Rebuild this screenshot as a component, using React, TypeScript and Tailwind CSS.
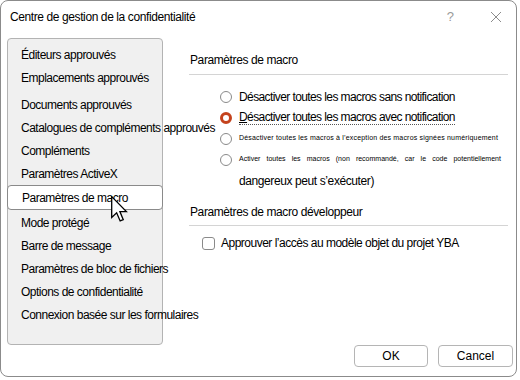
import React from "react";

const items: { label: string; cls: string; selected?: boolean }[] = [
  { label: "Éditeurs approuvés", cls: "" },
  { label: "Emplacements approuvés", cls: "" },
  { label: "Documents approuvés", cls: "mt-[4px]" },
  { label: "Catalogues de compléments approuvés", cls: "" },
  { label: "Compléments", cls: "" },
  { label: "Paramètres ActiveX", cls: "" },
  { label: "Paramètres de macro", cls: "", selected: true },
  { label: "Mode protégé", cls: "mt-[1px]" },
  { label: "Barre de message", cls: "" },
  { label: "Paramètres de bloc de fichiers", cls: "" },
  { label: "Options de confidentialité", cls: "" },
  { label: "Connexion basée sur les formulaires", cls: "" },
];

function Radio({ checked }: { checked?: boolean }) {
  return checked ? (
    <span className="w-[12px] h-[12px] rounded-full border-[3.5px] border-[#c4431d] bg-white shrink-0" />
  ) : (
    <span className="w-[12px] h-[12px] rounded-full border border-[#8a8a8a] bg-white shrink-0" />
  );
}

function Cursor() {
  return (
    <svg
      className="absolute left-[110px] top-[195px]"
      width="17"
      height="26"
      viewBox="0 0 13 20"
    >
      <path
        d="M0.5 0.5 L0.5 16.5 L4.3 12.9 L7 19.2 L9.4 18.2 L6.8 12 L11.8 12 Z"
        fill="#ffffff"
        stroke="#000000"
        strokeWidth="1"
        strokeLinejoin="miter"
      />
    </svg>
  );
}

export default function App() {
  return (
    <div
      className="w-[518px] h-[378px] bg-white"
      style={{ fontFamily: '"Liberation Sans", Arial, sans-serif' }}
    >
      <div className="relative w-[517px] h-[377px] border border-[#8b8b8b] rounded-[8px] bg-white text-black flex flex-col">
        {/* Title bar */}
        <div className="h-[32px] flex items-center pl-[9px] shrink-0">
          <span className="text-[12px] tracking-[-0.4px] leading-[16px]">
            Centre de gestion de la confidentialité
          </span>
          <div className="ml-auto flex items-center">
            <span className="text-[13px] text-[#9a9a9a] leading-[16px] mr-[36px]">?</span>
            <svg width="12" height="12" viewBox="0 0 12 12" className="mr-[14px]">
              <path d="M1 1 L11 11 M11 1 L1 11" stroke="#8c8c8c" strokeWidth="1" />
            </svg>
          </div>
        </div>

        {/* Body */}
        <div className="flex mt-[5px] h-[307px] shrink-0">
          <div className="ml-[6px] w-[156px] h-[307px] bg-[#f0f0f0] border border-[#b3b3b3] rounded-[4px] pt-[4px] flex flex-col shrink-0">
            {items.map((it) =>
              it.selected ? (
                <div
                  key={it.label}
                  className="-mx-px h-[25px] bg-white border border-[#8a8a8a] rounded-[4px] flex items-center pl-[14px] text-[12px] tracking-[-0.5px] whitespace-nowrap"
                >
                  {it.label}
                </div>
              ) : (
                <div
                  key={it.label}
                  className={`h-[23px] flex items-center pl-[13px] text-[12px] tracking-[-0.5px] whitespace-nowrap ${it.cls}`}
                >
                  {it.label}
                </div>
              )
            )}
          </div>

          <div className="ml-[26px] w-[319px] flex flex-col">
            <div className="pt-[14px] pb-[6px] border-b border-[#d4d4d4] text-[12px] leading-[16px] tracking-[-0.4px] pl-px">
              Paramètres de macro
            </div>

            <div className="mt-[11px] flex flex-col">
              <div className="h-[21px] flex items-center pl-[31px] gap-[7px]">
                <Radio />
                <span className="text-[12px] tracking-[-0.6px] whitespace-nowrap">
                  Désactiver toutes les macros sans notification
                </span>
              </div>
              <div className="h-[21px] flex items-center pl-[31px] gap-[7px]">
                <Radio checked />
                <span className="text-[12px] tracking-[-0.6px] whitespace-nowrap border-b border-dotted border-[#555] leading-[14px]">
                  <span className="underline">D</span>ésactiver toutes les macros avec notification
                </span>
              </div>
              <div className="h-[21px] flex items-center pl-[31px] gap-[7px]">
                <Radio />
                <span className="text-[7px] tracking-[0.18px] whitespace-nowrap">
                  Désactiver toutes les macros à l’exception des macros signées numériquement
                </span>
              </div>
              <div className="h-[21px] flex items-center pl-[31px] gap-[7px]">
                <Radio />
                <span className="w-[262px] text-[7px] whitespace-nowrap flex justify-between">
                  {"Activer toutes les macros (non recommandé, car le code potentiellement"
                    .split(" ")
                    .map((w, i) => (
                      <span key={i}>{w}</span>
                    ))}
                </span>
              </div>
              <div className="h-[21px] flex items-center pl-[50px]">
                <span className="text-[12px] tracking-[-0.4px] whitespace-nowrap">
                  dangereux peut s’exécuter)
                </span>
              </div>
            </div>

            <div className="mt-[13px] pb-[5px] border-b border-[#d4d4d4] text-[12px] leading-[16px] tracking-[-0.4px] pl-px">
              Paramètres de macro développeur
            </div>

            <div className="mt-[11px] flex items-center pl-[13px] gap-[6px]">
              <span className="w-[13px] h-[13px] rounded-[3px] border border-[#8a8a8a] bg-white shrink-0" />
              <span className="text-[12px] tracking-[-0.5px] whitespace-nowrap leading-[13px]">
                Approuver l’accès au modèle objet du projet YBA
              </span>
            </div>
          </div>
        </div>

        {/* Footer */}
        <div className="flex justify-end gap-[10px] pr-[3px] shrink-0">
          <button className="w-[74px] h-[22px] bg-white border border-[#b5b5b5] rounded-[4px] text-[12px] leading-[16px] text-black">
            OK
          </button>
          <button className="w-[75px] h-[22px] bg-white border border-[#b5b5b5] rounded-[4px] text-[12px] leading-[16px] text-black">
            Cancel
          </button>
        </div>

        <Cursor />
      </div>
    </div>
  );
}
